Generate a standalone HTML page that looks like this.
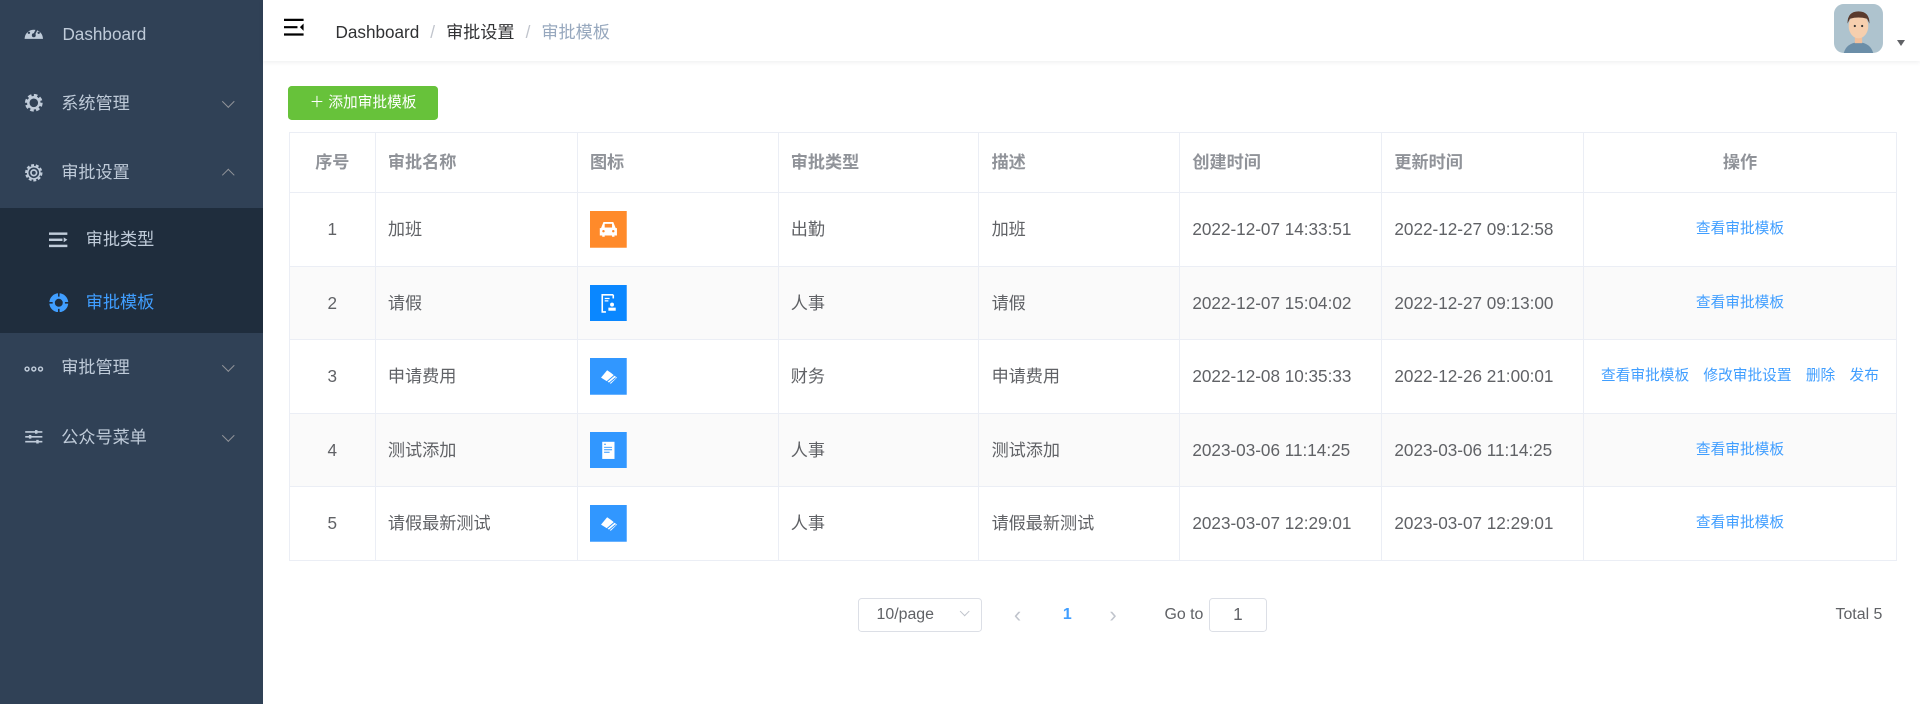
<!DOCTYPE html>
<html><head><meta charset="utf-8"><style>
*{margin:0;padding:0;box-sizing:border-box}
html,body{width:1920px;height:704px;overflow:hidden;background:#fff}
#w{zoom:1.22449;width:1568px;height:575px;position:relative;font-family:"Liberation Sans","Noto Sans CJK SC",sans-serif;font-size:14px;color:#606266}
.side{position:absolute;left:0;top:0;width:215px;height:575px;background:#304156}
.mi{position:absolute;left:0;width:215px;height:56px;color:#bfcbd9;line-height:56px}
.mi .ic{position:absolute;left:20px;top:20px;width:16px;height:16px}
.mi .t{position:absolute;left:50px}
.mi .ar{position:absolute;left:183px;top:23px;width:7px;height:7px;border-right:1px solid #909399;border-bottom:1px solid #909399;transform:rotate(45deg)}
.mi .ar.up{top:27px;transform:rotate(-135deg)}
.sub{position:absolute;left:0;top:170px;width:215px;height:102px;background:#1f2d3d}
.hdr{position:absolute;left:215px;top:0;right:0;height:50px;box-shadow:0 1px 4px rgba(0,21,41,.08);background:#fff}
.btn{position:absolute;left:235px;top:70px;width:123px;height:28px;background:#67c23a;border-radius:3px;color:#fff;font-size:12px;line-height:28px;text-align:center}
table{position:absolute;left:236px;top:108px;width:1313px;border-collapse:collapse;table-layout:fixed;border:1px solid #ebeef5}
td,th{border:1px solid #ebeef5;padding:0 10px;text-align:left;line-height:20px}
td span,th span{vertical-align:top}
th{height:49px;color:#909399;font-weight:bold}
td{height:60px}
tr.s td{background:#fafafa}
.c{text-align:center}
.ico{width:30px;height:30px;display:block}
.lk{color:#409eff;font-size:12px}
.pg{position:absolute;top:488px;height:28px;line-height:28px;font-size:13px}
</style></head><body><div id="w">
<div class="side">
 <div class="mi" style="top:0"><svg class="ic" viewBox="0 0 16 16" style="top:19px"><path d="M0.5 13A7.5 7.5 0 1 1 15.5 13Z" fill="#bfcbd9"/><circle cx="8" cy="10" r="1.6" fill="#304156"/><path d="M8 10L10.5 5" stroke="#304156" stroke-width="1.5"/><circle cx="4" cy="8" r="1" fill="#304156"/><circle cx="12" cy="8" r="1" fill="#304156"/><circle cx="6" cy="4.5" r="1" fill="#304156"/></svg><span class="t" style="left:51px">Dashboard</span></div>
 <div class="mi" style="top:56px"><svg class="ic" viewBox="0 0 16 16"><circle cx="8" cy="8" r="5.5" fill="none" stroke="#bfcbd9" stroke-width="3.5" stroke-dasharray="2.6 1.7"/><circle cx="8" cy="8" r="4.5" fill="none" stroke="#bfcbd9" stroke-width="2"/></svg><span class="t">系统管理</span><i class="ar"></i></div>
 <div class="mi" style="top:113px"><svg class="ic" viewBox="0 0 16 16"><circle cx="8" cy="8" r="6.3" fill="none" stroke="#bfcbd9" stroke-width="1.6" stroke-dasharray="2.4 1.5"/><circle cx="8" cy="8" r="5" fill="none" stroke="#bfcbd9" stroke-width="1.3"/><circle cx="8" cy="8" r="2.3" fill="none" stroke="#bfcbd9" stroke-width="1.4"/></svg><span class="t">审批设置</span><i class="ar up"></i></div>
 <div class="sub"></div>
 <div class="mi" style="top:170px;height:51px;line-height:51px"><svg class="ic" viewBox="0 0 16 16" style="left:40px;top:18px"><rect x="0" y="2" width="15" height="2" fill="#bfcbd9"/><rect x="0" y="7" width="11" height="2" fill="#bfcbd9"/><rect x="0" y="12" width="15" height="2" fill="#bfcbd9"/><path d="M12 6L15 8L12 10Z" fill="#bfcbd9"/></svg><span class="t" style="left:70px">审批类型</span></div>
 <div class="mi" style="top:221px;height:51px;line-height:51px;color:#409eff"><svg class="ic" viewBox="0 0 16 16" style="left:40px;top:18px"><circle cx="8" cy="8" r="5.5" fill="none" stroke="#409eff" stroke-width="4.5"/><path d="M8 0V3M8 13V16M0 8H3M13 8H16" stroke="#1f2d3d" stroke-width="1.3"/></svg><span class="t" style="left:70px">审批模板</span></div>
 <div class="mi" style="top:272px"><svg class="ic" viewBox="0 0 16 16"><circle cx="2.5" cy="9" r="1.6" fill="none" stroke="#bfcbd9" stroke-width="1.2"/><circle cx="8" cy="9" r="1.6" fill="none" stroke="#bfcbd9" stroke-width="1.2"/><circle cx="13.5" cy="9" r="1.6" fill="none" stroke="#bfcbd9" stroke-width="1.2"/></svg><span class="t">审批管理</span><i class="ar"></i></div>
 <div class="mi" style="top:329px"><svg class="ic" viewBox="0 0 16 16"><path d="M1 4H15M1 8H15M1 12H15" stroke="#bfcbd9" stroke-width="1.3"/><rect x="9" y="2.5" width="2" height="3" fill="#bfcbd9"/><rect x="4" y="6.5" width="2" height="3" fill="#bfcbd9"/><rect x="10" y="10.5" width="2" height="3" fill="#bfcbd9"/></svg><span class="t">公众号菜单</span><i class="ar"></i></div>
</div>
<div class="hdr">
 <svg style="position:absolute;left:17px;top:15px" width="17" height="15" viewBox="0 0 17 15"><path d="M0 1.5H16M0 7.5H11M0 13.5H16" stroke="#000" stroke-width="1.8"/><path d="M16 4.5L13 7.5L16 10.5Z" fill="#000"/></svg>
 <div style="position:absolute;left:59px;top:15px;font-size:14px;color:#303133">Dashboard<span style="color:#c0c4cc;margin:0 9px">/</span>审批设置<span style="color:#c0c4cc;margin:0 9px">/</span><span style="color:#97a8be">审批模板</span></div>
 <svg style="position:absolute;left:1283px;top:3px" width="40" height="40" viewBox="0 0 40 40"><rect width="40" height="40" rx="8" fill="#aec3ce"/><path d="M8 40Q10 32 20 31Q30 32 32 40Z" fill="#6b8ea8"/><rect x="17" y="26" width="6" height="6" fill="#f2c09c"/><ellipse cx="20" cy="18" rx="8" ry="10" fill="#f6cfae"/><path d="M11 16Q11 6 20 6Q29 6 29 16L27 12Q20 10 13 12Z" fill="#5a3a2c"/><circle cx="17" cy="18" r="0.9" fill="#333"/><circle cx="23" cy="18" r="0.9" fill="#333"/></svg>
 <div style="position:absolute;left:1334px;top:33px;border:4px solid transparent;border-top:5px solid #606266"></div>
</div>
<div class="btn">＋ 添加审批模板</div>
<table>
<colgroup><col style="width:70px"><col style="width:165px"><col style="width:164px"><col style="width:164px"><col style="width:164px"><col style="width:165px"><col style="width:165px"><col></colgroup>
<tr><th class="c">序号</th><th>审批名称</th><th>图标</th><th>审批类型</th><th>描述</th><th>创建时间</th><th>更新时间</th><th class="c">操作</th></tr>
<tr><td class="c">1</td><td>加班</td><td><svg class="ico" viewBox="0 0 30 30"><rect width="30" height="30" fill="#ff8a2a"/><path d="M9 14L11 9H19L21 14H22V20H20V21H18V20H12V21H10V20H8V14Z" fill="#fff"/><circle cx="11" cy="16.5" r="1" fill="#ff8a2a"/><circle cx="19" cy="16.5" r="1" fill="#ff8a2a"/><rect x="12" y="10.5" width="6" height="3" fill="#ff8a2a"/></svg></td><td>出勤</td><td>加班</td><td>2022-12-07 14:33:51</td><td>2022-12-27 09:12:58</td><td class="c"><span class="lk">查看审批模板</span></td></tr>
<tr class="s"><td class="c">2</td><td>请假</td><td><svg class="ico" viewBox="0 0 30 30"><rect width="30" height="30" fill="#0a87ff"/><path d="M19 8H10V22H13" fill="none" stroke="#fff" stroke-width="1.3"/><path d="M19 8V11" stroke="#fff" stroke-width="1.3"/><path d="M12 11H16M12 13H15" stroke="#fff" stroke-width="1"/><circle cx="18" cy="16" r="1.6" fill="#fff"/><rect x="15" y="18.5" width="6" height="2.5" fill="#fff"/></svg></td><td>人事</td><td>请假</td><td>2022-12-07 15:04:02</td><td>2022-12-27 09:13:00</td><td class="c"><span class="lk">查看审批模板</span></td></tr>
<tr><td class="c">3</td><td>申请费用</td><td><svg class="ico" viewBox="0 0 30 30"><rect width="30" height="30" fill="#3197ff"/><path d="M9 16L14 10L17 12L22 16L17 21Z" fill="#fff"/><path d="M13 20L20 14M15 21L21 16" stroke="#3197ff" stroke-width="0.8"/></svg></td><td>财务</td><td>申请费用</td><td>2022-12-08 10:35:33</td><td>2022-12-26 21:00:01</td><td class="c" style="padding:0"><span class="lk">查看审批模板</span>&nbsp;&nbsp;&nbsp;<span class="lk">修改审批设置</span>&nbsp;&nbsp;&nbsp;<span class="lk">删除</span>&nbsp;&nbsp;&nbsp;<span class="lk">发布</span></td></tr>
<tr class="s"><td class="c">4</td><td>测试添加</td><td><svg class="ico" viewBox="0 0 30 30"><rect width="30" height="30" fill="#3197ff"/><rect x="10" y="8" width="10" height="14" fill="#fff"/><path d="M11.5 10H13M11.5 12.5H18M11.5 14.5H18M11.5 16.5H16" stroke="#3197ff" stroke-width="0.8"/></svg></td><td>人事</td><td>测试添加</td><td>2023-03-06 11:14:25</td><td>2023-03-06 11:14:25</td><td class="c"><span class="lk">查看审批模板</span></td></tr>
<tr><td class="c">5</td><td>请假最新测试</td><td><svg class="ico" viewBox="0 0 30 30"><rect width="30" height="30" fill="#3197ff"/><path d="M9 16L14 10L17 12L22 16L17 21Z" fill="#fff"/><path d="M13 20L20 14M15 21L21 16" stroke="#3197ff" stroke-width="0.8"/></svg></td><td>人事</td><td>请假最新测试</td><td>2023-03-07 12:29:01</td><td>2023-03-07 12:29:01</td><td class="c"><span class="lk">查看审批模板</span></td></tr>
</table>
<div class="pg" style="left:701px;width:101px;border:1px solid #dcdfe6;border-radius:3px;padding-left:14px;line-height:26px;color:#606266">10/page<span style="position:absolute;right:10px;top:8px;width:6px;height:6px;border-right:1px solid #c0c4cc;border-bottom:1px solid #c0c4cc;transform:rotate(45deg)"></span></div>
<div class="pg" style="left:828px;color:#c0c4cc;font-size:18px">&#8249;</div>
<div class="pg" style="left:868px;color:#409eff;font-weight:bold">1</div>
<div class="pg" style="left:906px;color:#c0c4cc;font-size:18px">&#8250;</div>
<div class="pg" style="left:951px;color:#606266">Go to</div>
<div class="pg" style="left:987px;width:48px;border:1px solid #dcdfe6;border-radius:3px;text-align:center;line-height:26px;font-size:14px">1</div>
<div class="pg" style="left:1499px;color:#606266">Total 5</div>
</div></body></html>
